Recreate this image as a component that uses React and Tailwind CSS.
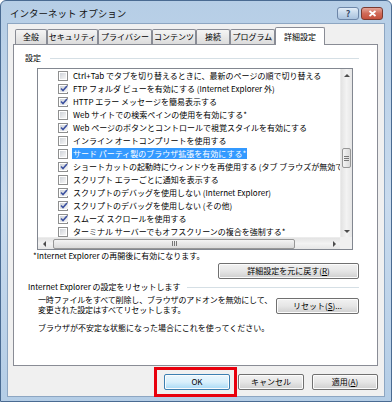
import React from "react";

const ITEMS = [
  { on: false, text: "Ctrl+Tab でタブを切り替えるときに、最新のページの順で切り替える" },
  { on: true, text: "FTP フォルダ ビューを有効にする (Internet Explorer 外)" },
  { on: true, text: "HTTP エラー メッセージを簡易表示する" },
  { on: false, text: "Web サイトでの検索ペインの使用を有効にする*" },
  { on: true, text: "Web ページのボタンとコントロールで視覚スタイルを有効にする" },
  { on: false, text: "インライン オートコンプリートを使用する" },
  { on: false, text: "サード パーティ製のブラウザ拡張を有効にする*", sel: true },
  { on: true, text: "ショートカットの起動時にウィンドウを再使用する (タブ ブラウズが無効である場合)" },
  { on: false, text: "スクリプト エラーごとに通知を表示する" },
  { on: true, text: "スクリプトのデバッグを使用しない (Internet Explorer)" },
  { on: true, text: "スクリプトのデバッグを使用しない (その他)" },
  { on: true, text: "スムーズ スクロールを使用する" },
  { on: false, text: "ターミナル サーバーでもオフスクリーンの複合を強制する*" },
];

const TABS = [
  { label: "全般", w: "w-[32px]" },
  { label: "セキュリティ", w: "w-[51px]" },
  { label: "プライバシー", w: "w-[54px]" },
  { label: "コンテンツ", w: "w-[44px]" },
  { label: "接続", w: "w-[34px]" },
  { label: "プログラム", w: "w-[45px]" },
];

function Check({ on }) {
  return (
    <span className="w-[10px] h-[10px] shrink-0 border border-[#8e8f8f] bg-white p-[1px] flex">
      <span className="flex-1 bg-linear-to-br from-[#cfd3d9] to-[#f7f7f7] flex items-center justify-center">
        {on && (
          <svg width="8" height="7" viewBox="0 0 8 7">
            <path d="M1 3.5 L3 5.5 L7 1" fill="none" stroke="#3d52a0" strokeWidth="1.6" />
          </svg>
        )}
      </span>
    </span>
  );
}

function Btn({ children, className = "", primary = false }) {
  const skin = primary
    ? "border-[#3c7fb1] bg-linear-to-b from-[#eaf6fd] via-[#d9f0fc] to-[#a7d9f5]"
    : "border-[#707070] bg-linear-to-b from-[#f2f2f2] via-[#e6e6e6] to-[#cfcfcf]";
  return (
    <div
      className={`h-[16px] shrink-0 rounded-[2px] border shadow-[inset_0_0_0_1px_#fcfcfc] flex items-center justify-center leading-none whitespace-nowrap ${skin} ${className}`}
    >
      {children}
    </div>
  );
}

function Arrow({ dir }) {
  const paths = {
    up: "M0 4 L3 1 L6 4 Z",
    down: "M0 1 L3 4 L6 1 Z",
    left: "M4 0 L1 3 L4 6 Z",
    right: "M1 0 L4 3 L1 6 Z",
  };
  const vert = dir === "up" || dir === "down";
  return (
    <span className="w-[12px] h-[12px] shrink-0 flex items-center justify-center">
      <svg width={vert ? 6 : 5} height={vert ? 5 : 6} viewBox={vert ? "0 0 6 5" : "0 0 5 6"}>
        <path d={paths[dir]} fill="#4d4d4d" />
      </svg>
    </span>
  );
}

function VScroll() {
  return (
    <div className="w-[12px] shrink-0 flex flex-col bg-linear-to-r from-[#e3e3e3] via-[#f3f3f3] to-[#e6e6e6] border-l border-[#ececec]">
      <Arrow dir="up" />
      <div className="flex-1 flex flex-col">
        <div className="mt-[67px] h-[20px] mx-[1px] rounded-[2px] border border-[#979797] bg-linear-to-r from-[#f4f4f4] to-[#dadada] flex flex-col items-center justify-center gap-[1px]">
          <span className="w-[5px] h-px bg-[#777]" />
          <span className="w-[5px] h-px bg-[#777]" />
          <span className="w-[5px] h-px bg-[#777]" />
        </div>
      </div>
      <Arrow dir="down" />
    </div>
  );
}

function HScroll() {
  return (
    <div className="flex-1 flex items-center bg-linear-to-b from-[#e3e3e3] via-[#f3f3f3] to-[#e6e6e6] border-t border-[#ececec]">
      <Arrow dir="left" />
      <div className="ml-[3px] w-[242px] h-[10px] rounded-[2px] border border-[#979797] bg-linear-to-b from-[#f4f4f4] to-[#dadada] flex items-center justify-center gap-[1px]">
        <span className="w-px h-[5px] bg-[#777]" />
        <span className="w-px h-[5px] bg-[#777]" />
        <span className="w-px h-[5px] bg-[#777]" />
      </div>
      <div className="flex-1" />
      <Arrow dir="right" />
    </div>
  );
}

export default function App() {
  return (
    <div className="w-[392px] h-[402px] flex flex-col border border-[#4a6b92] rounded-t-[6px] bg-linear-to-b from-[#b6cee6] via-[#c9dbee] to-[#b4cde6] text-black text-[8px] font-['Noto_Sans_CJK_JP',sans-serif] overflow-hidden">
      {/* title bar */}
      <div className="h-[22px] shrink-0 flex items-start justify-between pl-[9px] pr-[8px]">
        <span className="mt-[8px] text-[9.5px] leading-none text-[#111]">インターネット オプション</span>
        <div className="mt-[6px] flex gap-[2px]">
          <div className="w-[22px] h-[13px] rounded-[3px] border border-[#6d86a8] bg-linear-to-b from-[#e3edf7] via-[#c3d6ea] to-[#a9c2de] flex items-center justify-center text-[9px] font-bold leading-none text-[#3a4d6a]">
            ?
          </div>
          <div className="w-[22px] h-[13px] rounded-[3px] border border-[#7a3a30] bg-linear-to-b from-[#e4a497] via-[#d06a58] to-[#c5503c] flex items-center justify-center">
            <svg width="9" height="7" viewBox="0 0 9 7">
              <path d="M1.5 1 L7.5 6 M7.5 1 L1.5 6" stroke="#fff" strokeWidth="1.8" />
            </svg>
          </div>
        </div>
      </div>

      {/* client area */}
      <div className="flex-1 mx-[6px] mb-[4px] border border-[#8da6c2] bg-[#f0f0f0] flex flex-col pl-[5px] pr-[6px]">
        {/* tabs */}
        <div className="mt-[3px] h-[17px] flex items-end pl-[2px]">
          {TABS.map((t) => (
            <div
              key={t.label}
              className={`${t.w} h-[15px] border-t border-l border-r border-[#898c95] rounded-t-[2px] bg-linear-to-b from-[#f5f5f5] to-[#dcdcdc] flex items-center justify-center leading-none`}
            >
              {t.label}
            </div>
          ))}
          <div className="w-[50px] h-[18px] -mb-px border-t border-l border-r border-[#898c95] rounded-t-[2px] bg-white flex items-center justify-center leading-none relative z-10">
            詳細設定
          </div>
        </div>

        {/* panel */}
        <div className="h-[322px] border border-[#898c95] bg-white flex flex-col">
          <div className="mt-[8px] h-[10px] flex items-center pl-[11px] pr-[18px]">
            <span className="leading-none">設定</span>
            <span className="flex-1 ml-[9px] h-px bg-[#d5dfe5]" />
          </div>

          <div className="ml-[23px] mt-[5px] w-[316px] h-[182px] border border-[#828790] bg-white flex flex-col">
            <div className="flex-1 min-h-0 flex">
              <div className="flex-1 min-w-0 overflow-hidden">
                {ITEMS.map((it, i) => (
                  <div key={i} className="h-[13px] flex items-center pl-[20px] gap-[4px] whitespace-nowrap">
                    <Check on={it.on} />
                    <span
                      className={`leading-[11px] px-[1px] ${it.sel ? "bg-[#3399ff] text-white" : ""}`}
                    >
                      {it.text}
                    </span>
                  </div>
                ))}
              </div>
              <VScroll />
            </div>
            <div className="h-[12px] shrink-0 flex">
              <HScroll />
              <div className="w-[12px] bg-[#f0f0f0]" />
            </div>
          </div>

          <div className="mt-[1px] h-[10px] pl-[19px] leading-[10px]">
            *Internet Explorer の再開後に有効になります。
          </div>

          <div className="mt-[2px] flex justify-end pr-[18px]">
            <Btn className="w-[141px]">
              詳細設定を元に戻す(<span className="underline">R</span>)
            </Btn>
          </div>

          <div className="mt-[3px] h-[10px] flex items-center pl-[14px] pr-[18px]">
            <span className="leading-none">Internet Explorer の設定をリセットします</span>
            <span className="flex-1 ml-[6px] h-px bg-[#d5dfe5]" />
          </div>

          <div className="mt-[3px] flex pl-[24px] pr-[18px]">
            <div className="flex-1 min-w-0 flex flex-col leading-[10px] whitespace-nowrap tracking-[-0.15px]">
              <span>一時ファイルをすべて削除し、ブラウザのアドオンを無効にして、</span>
              <span>変更された設定はすべてリセットします。</span>
            </div>
            <Btn className="w-[83px] mt-[3px]">
              リセット(<span className="underline">S</span>)...
            </Btn>
          </div>

          <div className="mt-[8px] pl-[24px] leading-[10px] whitespace-nowrap">
            ブラウザが不安定な状態になった場合にこれを使ってください。
          </div>
        </div>

        {/* dialog buttons */}
        <div className="mt-[8px] flex justify-end gap-[8px]">
          <div className="relative">
            <Btn primary className="w-[66px]">OK</Btn>
            <div className="absolute -left-[10px] -top-[7px] w-[83px] h-[30px] border-[3px] border-[#e8000d]" />
          </div>
          <Btn className="w-[66px]">キャンセル</Btn>
          <Btn className="w-[66px]">
            適用(<span className="underline">A</span>)
          </Btn>
        </div>
      </div>
    </div>
  );
}
